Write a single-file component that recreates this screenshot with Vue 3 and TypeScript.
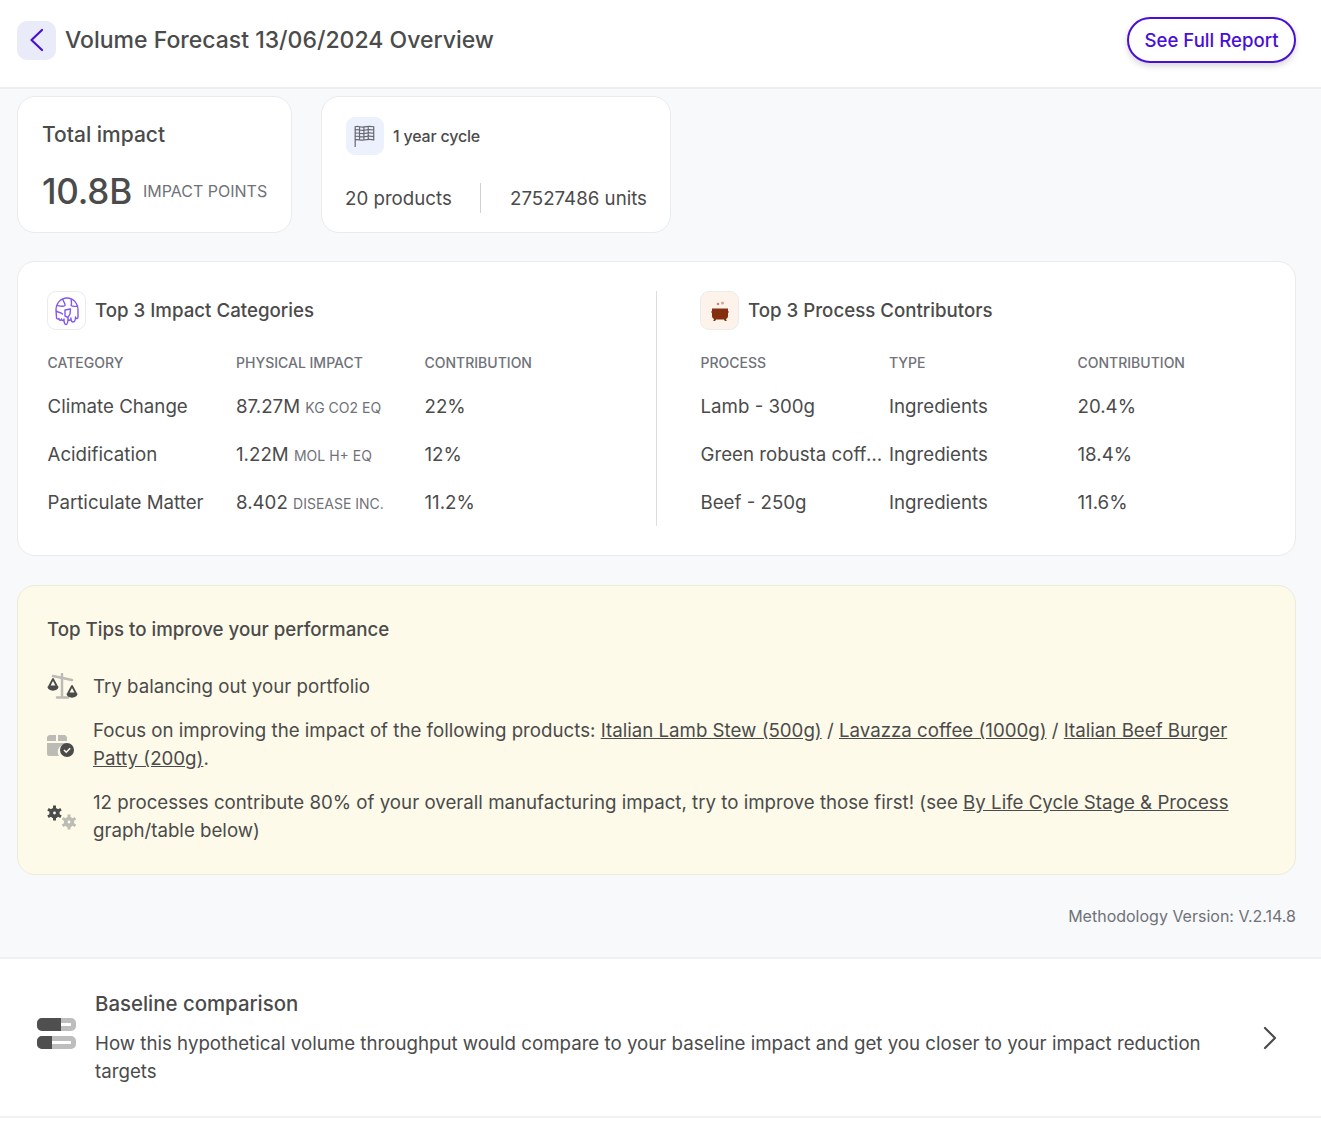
<script setup lang="ts">
const categories = [
  { name: 'Climate Change', value: '87.27M', unit: 'kg CO2 eq', share: '22%' },
  { name: 'Acidification', value: '1.22M', unit: 'mol H+ eq', share: '12%' },
  { name: 'Particulate Matter', value: '8.402', unit: 'disease inc.', share: '11.2%' },
];

const processes = [
  { name: 'Lamb - 300g', type: 'Ingredients', share: '20.4%' },
  { name: 'Green robusta coffee beans', type: 'Ingredients', share: '18.4%' },
  { name: 'Beef - 250g', type: 'Ingredients', share: '11.6%' },
];
</script>

<template>
  <div class="page">
    <header class="topbar">
      <div class="topbar__left">
        <button class="back" type="button" aria-label="Back">
          <svg width="24" height="24" viewBox="0 0 24 24" fill="none" stroke="#4a0fd6" stroke-width="2.2" stroke-linecap="round" stroke-linejoin="round"><path d="M17 2 6.500 12 17 22" /></svg>
        </button>
        <h1>Volume Forecast 13/06/2024 Overview</h1>
      </div>
      <button class="report" type="button">See Full Report</button>
    </header>

    <main class="content">
      <section class="summary">
        <div class="card total">
          <div class="total__title">Total impact</div>
          <div class="total__row">
            <span class="total__value">10.8B</span>
            <span class="total__unit">IMPACT POINTS</span>
          </div>
        </div>
        <div class="card cycle">
          <div class="cycle__head">
            <span class="icon-box icon-box--blue">
              <svg width="24" height="24" viewBox="0 0 22 22" fill="none" stroke="#66696f" stroke-width="1.1"><path d="M2 2.500c3-1 5 .8 8 .2s6-.8 9-.2v12c-3-.6-6-.4-9 .2s-5-1-8-.2zM2 14v7M2 5.500c3-1 5 .8 8 .2s6-.8 9-.2M2 8.500c3-1 5 .8 8 .2s6-.8 9-.2M2 11.500c3-1 5 .8 8 .2s6-.8 9-.2M6 2.500v12M10 3v12M14 2.500v12" /></svg>
            </span>
            <span class="cycle__label">1 year cycle</span>
          </div>
          <div class="cycle__row">
            <span>20 products</span>
            <span class="cycle__sep"></span>
            <span>27527486 units</span>
          </div>
        </div>
      </section>

      <section class="card tops">
        <div class="tops__col">
          <div class="tops__head">
            <span class="icon-box">
              <svg width="26" height="30" viewBox="0 0 26 30" fill="none" stroke="#8257f0" stroke-width="1.4" stroke-linejoin="round" stroke-linecap="round"><path d="M2 14C2 7 7 2 13 2s11 5 11 12v7c0 2-2.500 2-2.500 0 0 3.500-1.200 5-2.500 5s-2-1-2-4c0 3-3 3-3 0 0 5.500-1 6.500-2 6.500s-2-1.500-2-5.500c0 2-2.500 2-2.500 0-.5 2-2.500 1.500-2.500-.5-1 1-2.500 .5-2.500-1zM9 3c0 3 2.500 4 2 6.500-2 1.500-5.500.5-8 0M17.500 3c-1 2.500 1 4-.5 6.500 2 1.500 4 1 6.500.5M11 14l5.500-1-.5 5-2 3.500-3-1.500zM2.500 15c2 2 4 1 6 3" /></svg>
            </span>
            <h2>Top 3 Impact Categories</h2>
          </div>
          <div class="table">
            <div class="table__row table__row--head">
              <span>Category</span><span>Physical impact</span><span>Contribution</span>
            </div>
            <div v-for="c in categories" :key="c.name" class="table__row">
              <span>{{ c.name }}</span>
              <span>{{ c.value }} <small>{{ c.unit }}</small></span>
              <span>{{ c.share }}</span>
            </div>
          </div>
        </div>
        <div class="tops__col tops__col--right">
          <div class="tops__head">
            <span class="icon-box icon-box--peach">
              <svg width="24" height="24" viewBox="0 0 24 24"><circle cx="14.500" cy="4" r="1.500" fill="#d8a593" /><circle cx="10" cy="5" r="1.300" fill="#c98770" /><path d="M4 9.500h16v2.500l1 1-1 1v3c0 1.500-1 2.500-2 3l.7 2h-1.800l-1-1.500H8.100l-1 1.500H5.300l.7-2c-1-.5-2-1.500-2-3v-3l-1-1 1-1z" fill="#84300f" /></svg>
            </span>
            <h2>Top 3 Process Contributors</h2>
          </div>
          <div class="table">
            <div class="table__row table__row--head">
              <span>Process</span><span>Type</span><span>Contribution</span>
            </div>
            <div v-for="p in processes" :key="p.name" class="table__row">
              <span class="ellipsis">{{ p.name }}</span>
              <span>{{ p.type }}</span>
              <span>{{ p.share }}</span>
            </div>
          </div>
        </div>
      </section>

      <section class="tips">
        <h3>Top Tips to improve your performance</h3>
        <ul>
          <li>
            <svg class="tip-icon" width="32" height="28" viewBox="0 0 32 28" fill="none">
              <path d="M6 3l19 4M15 1v22M10 24.500h11" stroke="#bdbcb4" stroke-width="2.500" stroke-linecap="round" />
              <path d="M6 6 2 13.500h8zM25 13l-4 7.500h8z" stroke="#4b4b4b" stroke-width="1.800" fill="#fdfae9" stroke-linejoin="round" />
              <path d="M.5 13.500h11c0 5.500-11 5.500-11 0zM19.500 20.500h11c0 5.500-11 5.500-11 0z" fill="#4b4b4b" />
            </svg>
            <span>Try balancing out your portfolio</span>
          </li>
          <li>
            <svg class="tip-icon" width="32" height="28" viewBox="0 0 32 28">
              <path d="M2 4h7v6H0V6zM11 4h7l2 2v4h-9zM0 12h20v1a8 8 0 0 0-8 12H2a2 2 0 0 1-2-2z" fill="#bdbcb4" />
              <circle cx="20" cy="19" r="7" fill="#4b4b4b" />
              <path d="m17 19 2.200 2.200 4-4" stroke="#fdfae9" stroke-width="1.600" fill="none" />
            </svg>
            <span>Focus on improving the impact of the following products: <a>Italian Lamb Stew (500g)</a> / <a>Lavazza coffee (1000g)</a> / <a>Italian Beef Burger Patty (200g)</a>.</span>
          </li>
          <li>
            <svg class="tip-icon" width="32" height="28" viewBox="0 0 32 28" fill="none">
              <circle cx="7.500" cy="10" r="3.300" stroke="#4b4b4b" stroke-width="3.800" />
              <path d="M7.500 2.500v15M1 6.250l13 7.500M14 6.250l-13 7.500" stroke="#4b4b4b" stroke-width="3" stroke-dasharray="3 9" />
              <circle cx="22" cy="19" r="3.300" stroke="#bdbcb4" stroke-width="3.800" />
              <path d="M22 11.500v15M15.500 15.250l13 7.500M28.500 15.250l-13 7.500" stroke="#bdbcb4" stroke-width="3" stroke-dasharray="3 9" />
            </svg>
            <span>12 processes contribute 80% of your overall manufacturing impact, try to improve those first! (see <a>By Life Cycle Stage &amp; Process</a> graph/table below)</span>
          </li>
        </ul>
      </section>

      <p class="version">Methodology Version: V.2.14.8</p>
    </main>

    <section class="baseline">
      <svg class="baseline__icon" width="40" height="32" viewBox="0 0 40 32">
        <rect y="1" width="39" height="13" rx="5" fill="#bdbdbd" />
        <rect y="19" width="39" height="13" rx="5" fill="#bdbdbd" />
        <rect x="24" y="6" width="10" height="3" fill="#fff" />
        <rect x="15" y="24" width="19" height="3" fill="#fff" />
        <path d="M5 1h19v13H5a5 5 0 0 1-5-5V6a5 5 0 0 1 5-5zM5 19h10v13H5a5 5 0 0 1-5-5v-3a5 5 0 0 1 5-5z" fill="#4f4f4f" />
      </svg>
      <div class="baseline__text">
        <h3>Baseline comparison</h3>
        <p>How this hypothetical volume throughput would compare to your baseline impact and get you closer to your impact reduction targets</p>
      </div>
      <svg class="baseline__arrow" width="16" height="24" viewBox="0 0 16 24" fill="none" stroke="#4b4b4b" stroke-width="2.200" stroke-linecap="round" stroke-linejoin="round"><path d="m3 2 10 10L3 22" /></svg>
    </section>
  </div>
</template>

<style>
html,
body {
  margin: 0;
  background: #fff;
}
</style>

<style scoped>
.page {
  min-height: 1140px;
  background: #fff;
  color: #4b4b4b;
  font-family: Inter, 'Noto Sans', sans-serif;
  font-size: 18.700px;
}
.topbar {
  height: 89px;
  box-sizing: border-box;
  display: flex;
  align-items: center;
  justify-content: space-between;
  padding: 0 25px 7px 17px;
  background: #fff;
  border-bottom: 2px solid #eceef1;
}
.topbar__left {
  display: flex;
  align-items: center;
  gap: 9px;
}
.back {
  width: 39px;
  height: 39px;
  padding: 0;
  display: flex;
  align-items: center;
  justify-content: center;
  background: #e9ebf8;
  border: none;
  border-radius: 10px;
}
h1 {
  margin: 0;
  font-size: 23px;
  font-weight: 500;
}
.report {
  width: 169px;
  height: 46px;
  padding: 0;
  background: #fff;
  border: 2px solid #4a0fd6;
  border-radius: 24px;
  box-shadow: 0 3px 6px rgba(0, 0, 0, 0.16);
  color: #4a0fd6;
  font-family: inherit;
  font-size: 18.600px;
  font-weight: 500;
}
.content {
  padding: 7px 25px 30px 17px;
  background: #f8f9fb;
}
.summary {
  display: flex;
  gap: 29px;
}
.card {
  box-sizing: border-box;
  background: #fff;
  border: 1px solid #e9ebee;
  border-radius: 18px;
}
.total {
  width: 275px;
  height: 137px;
  padding: 25px 12px 0 24px;
}
.total__title {
  font-size: 21px;
  font-weight: 500;
}
.total__row {
  display: flex;
  align-items: center;
  gap: 11px;
  margin-top: 23px;
}
.total__value {
  font-size: 35px;
  font-weight: 500;
  letter-spacing: -0.2px;
}
.total__unit {
  color: #6f7278;
  font-size: 16px;
  white-space: nowrap;
}
.cycle {
  width: 350px;
  height: 137px;
  padding: 20px 23px 0;
}
.cycle__head {
  display: flex;
  align-items: center;
  gap: 9px;
  margin-left: 1px;
}
.cycle__label {
  font-size: 16px;
  font-weight: 500;
  letter-spacing: -0.2px;
}
.cycle__row {
  display: flex;
  align-items: center;
  justify-content: space-between;
  margin-top: 28px;
}
.cycle__sep {
  width: 1px;
  height: 30px;
  background: #cfd1d4;
}
.icon-box {
  width: 39px;
  height: 39px;
  box-sizing: border-box;
  flex: none;
  display: flex;
  align-items: center;
  justify-content: center;
  background: #fff;
  border: 1px solid #e9ebee;
  border-radius: 9px;
}
.icon-box--blue {
  width: 38px;
  height: 38px;
  background: #edf1fd;
  border-color: #edf1fd;
}
.icon-box--peach {
  background: #fdf3ea;
}
.tops {
  display: grid;
  grid-template-columns: 1fr 1fr;
  height: 295px;
  margin-top: 28px;
  padding: 29px 30px 29px 29px;
}
.tops__col--right {
  padding-left: 43px;
  border-left: 1px solid #dcdee1;
}
.tops__head {
  display: flex;
  align-items: center;
  gap: 9px;
}
h2 {
  margin: 0;
  font-size: 18.700px;
  font-weight: 500;
}
.table {
  margin: 13px 0 0 0.5px;
}
.table__row {
  display: grid;
  grid-template-columns: 188.500px 188.500px 1fr;
  align-items: center;
  height: 48px;
}
.table__row--head {
  height: 39px;
  color: #6f7278;
  font-size: 14px;
  font-weight: 500;
  text-transform: uppercase;
}
.table__row small {
  color: #6f7278;
  font-size: 14px;
  text-transform: uppercase;
}
.ellipsis {
  overflow: hidden;
  padding-right: 6px;
  text-overflow: ellipsis;
  white-space: nowrap;
}
.tips {
  box-sizing: border-box;
  height: 290px;
  margin-top: 29px;
  padding: 32px 29px 0 29px;
  background: #fdfae9;
  border: 1px solid #ecebdc;
  border-radius: 18px;
}
.tips h3 {
  margin: 0;
  font-size: 18.700px;
  font-weight: 500;
}
ul {
  margin: 32px 0 0;
  padding: 0;
  list-style: none;
}
li {
  display: flex;
  align-items: center;
  gap: 14px;
  margin-bottom: 16px;
  line-height: 28px;
}
.tip-icon {
  flex: none;
}
a {
  color: inherit;
  text-decoration: underline;
}
.version {
  margin: 30px 0 0;
  color: #6f7278;
  font-size: 16px;
  line-height: 22px;
  text-align: right;
}
.baseline {
  box-sizing: border-box;
  display: flex;
  align-items: center;
  height: 161px;
  padding: 0 43px 0 37px;
  background: #fff;
  border-top: 2px solid #f0f1f3;
  border-bottom: 2px solid #f0f1f3;
}
.baseline__icon {
  flex: none;
  margin: 0 18px 10px 0;
}
.baseline__text {
  flex: 1;
  padding: 2px 50px 0 0;
}
.baseline__text h3 {
  margin: 0 0 14px;
  font-size: 20.400px;
  font-weight: 500;
}
.baseline__text p {
  margin: 0;
  line-height: 28px;
}
</style>
